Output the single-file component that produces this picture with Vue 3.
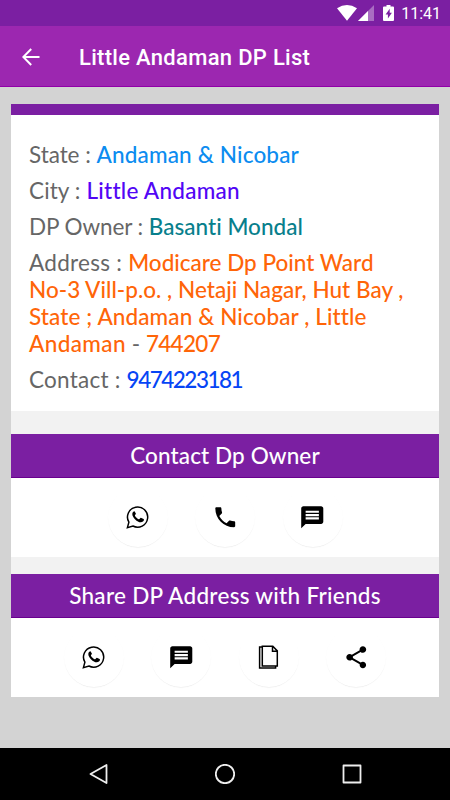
<script setup>
const whatsapp = [
  { d: 'M1.4 22.6l1.5-5.4A10.1 10.1 0 1 1 6.900 21z', line: true },
  { d: 'M8.2 6.2c-.4 0-1.9.9-1.9 2.7 0 3.6 5 8.4 8.5 8.4 1.5 0 3.2-1 3.2-2.7 0-.4-2.8-1.8-3.2-1.8-.5 0-1.2 1.5-1.7 1.5-.9 0-4.2-3-4.2-3.9 0-.4 1-1.100 1-1.600 0-.4-1.100-2.600-1.700-2.600z' },
]
const message = [
  { d: 'M20 2H4c-1.1 0-1.99.9-1.99 2L2 22l4-4h14c1.100 0 2-.9 2-2V4c0-1.100-.9-2-2-2zM18 14H6v-2h12v2zm0-3H6V9h12v2zm0-3H6V6h12v2z' },
]
const phone = [
  { d: 'M6.620 10.790c1.440 2.830 3.760 5.140 6.590 6.590l2.200-2.200c.27-.27.67-.36 1.020-.24 1.120.37 2.330.57 3.570.57.55 0 1 .45 1 1V20c0 .55-.45 1-1 1-9.390 0-17-7.610-17-17 0-.55.45-1 1-1h3.500c.55 0 1 .45 1 1 0 1.250.2 2.450.57 3.570.11.35.03.74-.25 1.020l-2.200 2.200z' },
]
const copy = [
  { d: 'M5.300 1.200h10.500l4.500 4.700v15.200h-15zM15.500 1.500v4.700h4.600M5 2.100H2.600v21h16v-1.700', line: true },
]
const share = [
  { d: 'M18 16.080c-.76 0-1.440.3-1.960.77L8.910 12.700c.05-.23.09-.46.09-.7s-.04-.47-.09-.7l7.050-4.110c.54.5 1.250.81 2.040.81 1.660 0 3-1.340 3-3s-1.340-3-3-3-3 1.340-3 3c0 .24.04.47.09.7L8.040 9.810C7.500 9.310 6.790 9 6 9c-1.660 0-3 1.340-3 3s1.340 3 3 3c.79 0 1.500-.31 2.040-.81l7.120 4.160c-.05.21-.08.43-.08.65 0 1.610 1.310 2.920 2.920 2.920s2.920-1.310 2.920-2.920-1.310-2.920-2.920-2.920z' },
]
const sections = [
  { key: 'contact', title: 'Contact Dp Owner', actions: [
    { name: 'WhatsApp', icon: whatsapp }, { name: 'Call', icon: phone, large: true }, { name: 'Message', icon: message, large: true },
  ] },
  { key: 'share', title: 'Share DP Address with Friends', actions: [
    { name: 'WhatsApp', icon: whatsapp }, { name: 'Message', icon: message, large: true }, { name: 'Copy', icon: copy }, { name: 'Share', icon: share, large: true },
  ] },
]
</script>

<template>
  <div class="screen">
    <div class="status">
      <svg class="wifi" viewBox="0 0 20 16"><path d="M0 3.200Q10-3.200 20 3.200L10 15.700z" /></svg>
      <svg class="signal" viewBox="0 0 16 16"><path class="dim" d="M16 0v16H0z" /><path d="M10 6v10H0z" /></svg>
      <svg class="battery" viewBox="0 0 11 16"><path fill-rule="evenodd" d="M3.500 0h4v1.500H10q1 0 1 1V15q0 1-1 1H1q-1 0-1-1V2.500q0-1 1-1h2.500zM6.700 3.700L2.600 9.400h2.300v4.200l4-5.800H6.700z" /></svg>
      <span class="clock">11:41</span>
    </div>
    <header class="bar">
      <svg class="back" viewBox="0 0 18 18"><path d="M17.500 9H1.500M9.200 1L1.300 9l7.900 8" /></svg>
      <h1>Little Andaman DP List</h1>
    </header>
    <main class="body">
      <div class="card">
        <div class="details">
          <p><span class="l-state">State : </span><b class="v-state">Andaman &amp; Nicobar</b></p>
          <p><span class="l-city">City : </span><b class="v-city">Little Andaman</b></p>
          <p><span class="l-owner">DP Owner : </span><b class="v-owner">Basanti Mondal</b></p>
          <p>
            <span class="l-address">Address : </span><b class="v-address a1">Modicare Dp Point Ward</b><br>
            <b class="v-address a2">No-3 Vill-p.o. , Netaji Nagar, Hut Bay ,</b><br>
            <b class="v-address a3">State ; Andaman &amp; Nicobar , Little</b><br>
            <b class="v-address a4">Andaman</b> - <b class="v-address a5">744207</b>
          </p>
          <p><span class="l-contact">Contact : </span><b class="v-contact">9474223181</b></p>
        </div>
        <section v-for="s in sections" :key="s.key" :class="s.key">
          <h2>{{ s.title }}</h2>
          <div class="actions">
            <button v-for="a in s.actions" :key="a.name" :aria-label="a.name">
              <svg viewBox="0 0 24 24" :class="{ large: a.large }"><path v-for="p in a.icon" :key="p.d" :d="p.d" :class="{ line: p.line }" /></svg>
            </button>
          </div>
        </section>
      </div>
    </main>
    <nav class="nav">
      <svg viewBox="0 0 20 20"><path d="M18.500 1v18L2.500 10z" /></svg>
      <svg viewBox="0 0 20 20"><circle cx="10" cy="10" r="9.200" /></svg>
      <svg viewBox="0 0 20 20"><rect x="1.500" y="1.500" width="17" height="17" /></svg>
    </nav>
  </div>
</template>

<style>
body { margin: 0; }
</style>

<style scoped>
.screen { width: 450px; height: 800px; display: flex; flex-direction: column; background: #d3d3d3; font-family: Lato, sans-serif; overflow: hidden; }
.status { height: 26px; flex: none; box-sizing: border-box; background: #7b1fa2; display: flex; align-items: center; justify-content: flex-end; padding-right: 9px; color: #fff; fill: #fff; }
.wifi { width: 20px; height: 16px; }
.signal { width: 16px; height: 16px; margin-left: 1px; }
.dim { opacity: .35; }
.battery { width: 11px; height: 16px; margin-left: 9px; }
.clock { font: 400 16px/26px Roboto, sans-serif; margin-left: 7px; padding-top: 2px; }
.bar { height: 61px; flex: none; box-sizing: border-box; background: #9c27b0; border-bottom: 1px solid #9100a8; display: flex; align-items: center; padding: 2px 0 0 22px; }
.back { width: 18px; height: 18px; fill: none; stroke: #fff; stroke-width: 2; }
h1 { margin: 2px 0 0 39px; font: 500 22px/30px Roboto, sans-serif; color: #fff; letter-spacing: .3px; white-space: nowrap; }
.body { flex: 1; padding: 17px 11px 0; }
.card { background: #f2f2f2; border-top: 11px solid #7b1fa2; }
.details { box-sizing: border-box; height: 296px; background: #fff; padding: 25.500px 0 0 18px; font-size: 22.500px; line-height: 27.200px; color: #666; white-space: nowrap; }
.details p { margin: 0 0 8.800px; }
.details span { white-space: pre; }
.details b { font-weight: 500; }
.l-state { letter-spacing: -.05px; }
.l-city { letter-spacing: .1px; }
.l-owner { letter-spacing: -.1px; }
.l-address { letter-spacing: .28px; }
.l-contact { letter-spacing: .24px; }
.v-state { color: #0c8cf0; letter-spacing: .17px; }
.v-city { color: #5206f5; letter-spacing: .27px; }
.v-owner { color: #087f8c; letter-spacing: .04px; }
.v-address { color: #ff6508; }
.a2 { letter-spacing: .03px; }
.a3 { letter-spacing: .11px; }
.a4 { letter-spacing: .4px; }
.a5 { letter-spacing: -.7px; }
.v-contact { color: #0645f5; letter-spacing: -1.500px; }
section { background: #fff; }
.contact { margin-top: 22.500px; height: 123.500px; }
.share { margin-top: 16.500px; height: 123.500px; }
h2 { margin: 0; box-sizing: border-box; height: 44.500px; background: #7b1fa2; border-bottom: 1px solid #69008f; color: #fff; font-size: 22.500px; font-weight: 500; line-height: 43px; text-align: center; white-space: nowrap; letter-spacing: .11px; }
.share h2 { letter-spacing: .29px; }
.actions { display: flex; justify-content: center; gap: 27.500px; padding-top: 9px; }
button { width: 60px; height: 60px; padding: 0; border: 0; border-radius: 50%; background: #fff; display: flex; align-items: center; justify-content: center; box-shadow: 0 1px 1px -.5px rgba(0, 0, 0, .1); }
button svg { width: 24px; height: 24px; }
button svg.large { width: 26.500px; height: 26.500px; }
.line { fill: none; stroke: #000; stroke-width: 1.500; }
.nav { height: 52px; flex: none; background: #000; display: flex; align-items: center; justify-content: center; gap: 107px; }
.nav svg { width: 20px; height: 20px; fill: none; stroke: #eee; stroke-width: 1.800; stroke-linejoin: round; }
</style>
